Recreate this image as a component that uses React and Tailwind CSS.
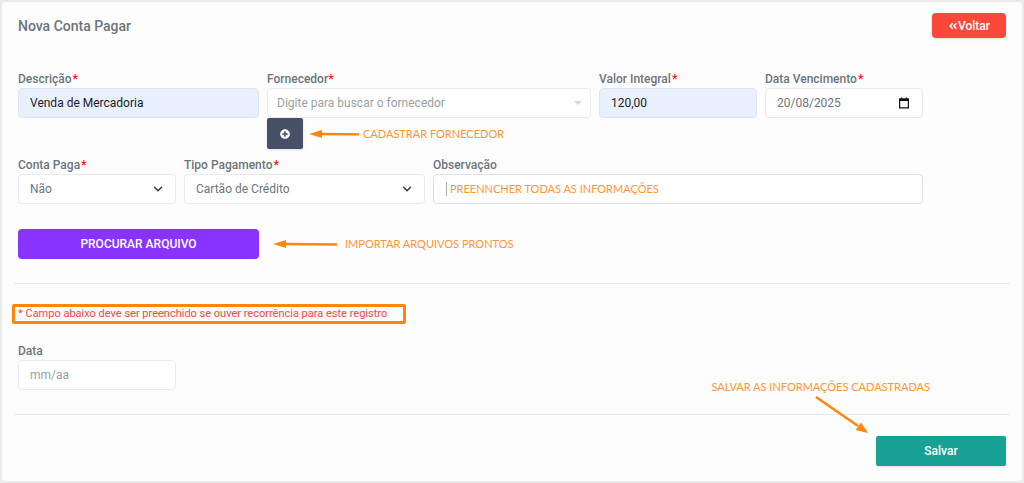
import { useState } from 'react';
import { FaAngleDoubleLeft, FaPlusCircle } from 'react-icons/fa';
import { ChevronDown } from 'lucide-react';

const control =
  'block w-full h-[30px] rounded border border-[#e9ecef] bg-white text-xs text-[#6c757d] placeholder:text-[#9b9fa3] outline-none';
const filled =
  'block w-full h-[30px] rounded border border-[#dfe6f1] bg-[#e8f0fe] px-[11px] text-xs text-[#1c1c1c] outline-none';

function Label({ htmlFor, children, required, tight }) {
  return (
    <label htmlFor={htmlFor} className="block text-xs leading-[18px] font-medium text-[#6c757d] whitespace-nowrap">
      {children}
      {required && <span className={tight ? 'font-bold text-[#ff1414]' : 'ml-px font-bold text-[#ff1414]'}>*</span>}
    </label>
  );
}

function Select({ id, options }) {
  return (
    <div className="relative">
      <select id={id} className={`${control} appearance-none px-[11px]`}>
        {options.map((opt) => (
          <option key={opt}>{opt}</option>
        ))}
      </select>
      <ChevronDown className="pointer-events-none absolute right-[11px] top-2 size-3.5 text-[#343a40]" strokeWidth={2.5} />
    </div>
  );
}

function Note({ children }) {
  return <span className="font-['Lato',sans-serif] text-[11px] leading-4 text-[#ff9533] whitespace-nowrap">{children}</span>;
}

function ArrowLeft({ className }) {
  return (
    <svg className={className} viewBox="0 0 64 12" preserveAspectRatio="xMinYMid slice" aria-hidden="true">
      <path d="M10 6L64 6.500" stroke="#ff860d" strokeWidth="2.4" />
      <path d="M0 6L13 2V10Z" fill="#ff860d" />
    </svg>
  );
}

function CalendarIcon() {
  return (
    <svg className="pointer-events-none absolute right-[13px] top-[9px] h-3 w-3" viewBox="0 0 12 12" aria-hidden="true">
      <path d="M3.5 0.5V3M8.5 0.5V3" stroke="#111" strokeWidth="1.3" />
      <path d="M1.6 2H10.4V10.9H1.6Z" fill="none" stroke="#111" strokeWidth="1.2" />
      <path d="M1.2 1.6H10.8V4H1.2Z" fill="#111" />
    </svg>
  );
}

export default function App() {
  const [descricao, setDescricao] = useState('Venda de Mercadoria');
  const [valor, setValor] = useState('120,00');
  const [vencimento, setVencimento] = useState('20/08/2025');
  const [observacao, setObservacao] = useState('PREENNCHER TODAS AS INFORMAÇÕES');

  return (
    <div className="bg-[#ebebeb] p-0.5 font-['Roboto',sans-serif]">
      <form className="rounded bg-[#fdfdfd] px-4 pt-[11px] pb-[15px]" onSubmit={(e) => e.preventDefault()}>
        {/* Header */}
        <div className="flex items-center justify-between">
          <h1 className="text-sm font-medium text-[#6c757d]">Nova Conta Pagar</h1>
          <button
            type="button"
            className="flex h-[25px] w-[74px] items-center justify-center rounded-sm bg-[#fb483a] text-xs font-medium text-white shadow-sm"
          >
            <FaAngleDoubleLeft className="size-2.5" />
            Voltar
          </button>
        </div>

        {/* Main fields */}
        <div className="mt-8 grid grid-cols-12 gap-x-2">
          <div className="col-span-3">
            <Label htmlFor="descricao" required>Descrição</Label>
            <input id="descricao" className={filled} value={descricao} onChange={(e) => setDescricao(e.target.value)} />
          </div>
          <div className="col-span-4">
            <Label htmlFor="fornecedor" required tight>Fornecedor</Label>
            <div className="relative">
              <input id="fornecedor" className={`${control} px-[9px]`} placeholder="Digite para buscar o fornecedor" />
              <span className="pointer-events-none absolute right-[9px] top-[13px] border-x-4 border-t-4 border-x-transparent border-t-[#d5dade]" />
            </div>
            <div className="flex items-center">
              <button
                type="button"
                aria-label="Cadastrar fornecedor"
                className="flex h-[31px] w-9 items-center justify-center rounded-xs bg-[#475069] text-white shadow-sm"
              >
                <FaPlusCircle className="size-2.5" />
              </button>
              <ArrowLeft className="mr-1 ml-1.5 h-3 w-[50px]" />
              <Note>CADASTRAR FORNECEDOR</Note>
            </div>
          </div>
          <div className="col-span-2">
            <Label htmlFor="valor" required>Valor Integral</Label>
            <input id="valor" className={filled} value={valor} onChange={(e) => setValor(e.target.value)} />
          </div>
          <div className="col-span-2">
            <Label htmlFor="vencimento" required>Data Vencimento</Label>
            <div className="relative">
              <input id="vencimento" className={`${control} px-[11px]`} value={vencimento} onChange={(e) => setVencimento(e.target.value)} />
              <CalendarIcon />
            </div>
          </div>
        </div>

        <div className="mt-[7px] grid grid-cols-12 gap-x-2">
          <div className="col-span-2">
            <Label htmlFor="paga" required>Conta Paga</Label>
            <Select id="paga" options={['Não', 'Sim']} />
          </div>
          <div className="col-span-3">
            <Label htmlFor="tipo" required>Tipo Pagamento</Label>
            <Select id="tipo" options={['Cartão de Crédito', 'Boleto', 'Dinheiro']} />
          </div>
          <div className="col-span-6">
            <Label htmlFor="observacao">Observação</Label>
            <div className="flex h-[30px] items-center gap-[3px] rounded border border-[#dee2e6] bg-white px-3">
              <span className="h-3.5 w-px bg-[#a9adb1]" />
              <input
                id="observacao"
                className="w-full font-['Lato',sans-serif] text-[11px] text-[#ff9533] outline-none"
                value={observacao}
                onChange={(e) => setObservacao(e.target.value)}
              />
            </div>
          </div>
        </div>

        {/* File import */}
        <div className="mt-[25px] grid grid-cols-12 items-center gap-x-2">
          <button type="button" className="col-span-3 h-[30px] rounded bg-[#8833ff] text-xs font-medium text-white">
            PROCURAR ARQUIVO
          </button>
          <div className="col-span-6 flex items-center">
            <ArrowLeft className="mr-2 ml-1.5 h-3 w-16" />
            <Note>IMPORTAR ARQUIVOS PRONTOS</Note>
          </div>
        </div>

        <hr className="-mx-1 mt-6 border-[#e9ecef]" />

        {/* Recurrence */}
        <p className="-ml-1.5 mt-5 w-fit rounded-xs border-3 border-[#ff860d] pr-4 pl-[3px] text-[11px] leading-3.5 text-[#fb483a]">
          * Campo abaixo deve ser preenchido se ouver recorrência para este registro
        </p>

        <div className="relative mt-[18px] grid grid-cols-12 gap-x-2">
          <div className="col-span-2">
            <Label htmlFor="data">Data</Label>
            <input id="data" className={`${control} px-[11px]`} placeholder="mm/aa" />
          </div>
          {/* Callout pointing at the save button */}
          <div className="absolute top-[37px] right-[76px] flex flex-col items-end">
            <Note>SALVAR AS INFORMAÇÕES CADASTRADAS</Note>
            <svg className="mr-[62px] h-10 w-[54px]" viewBox="0 0 54 40" aria-hidden="true">
              <path d="M2 2L44 31" stroke="#ff860d" strokeWidth="2.5" />
              <path d="M54 38L47 27.500L41.500 35Z" fill="#ff860d" />
            </svg>
          </div>
        </div>

        <hr className="-mx-1 mt-6 border-[#e9ecef]" />

        <div className="mt-[21px] flex justify-end">
          <button type="submit" className="h-[30px] w-[130px] rounded-xs bg-[#17a293] text-xs font-medium text-white shadow-sm">
            Salvar
          </button>
        </div>
      </form>
    </div>
  );
}
